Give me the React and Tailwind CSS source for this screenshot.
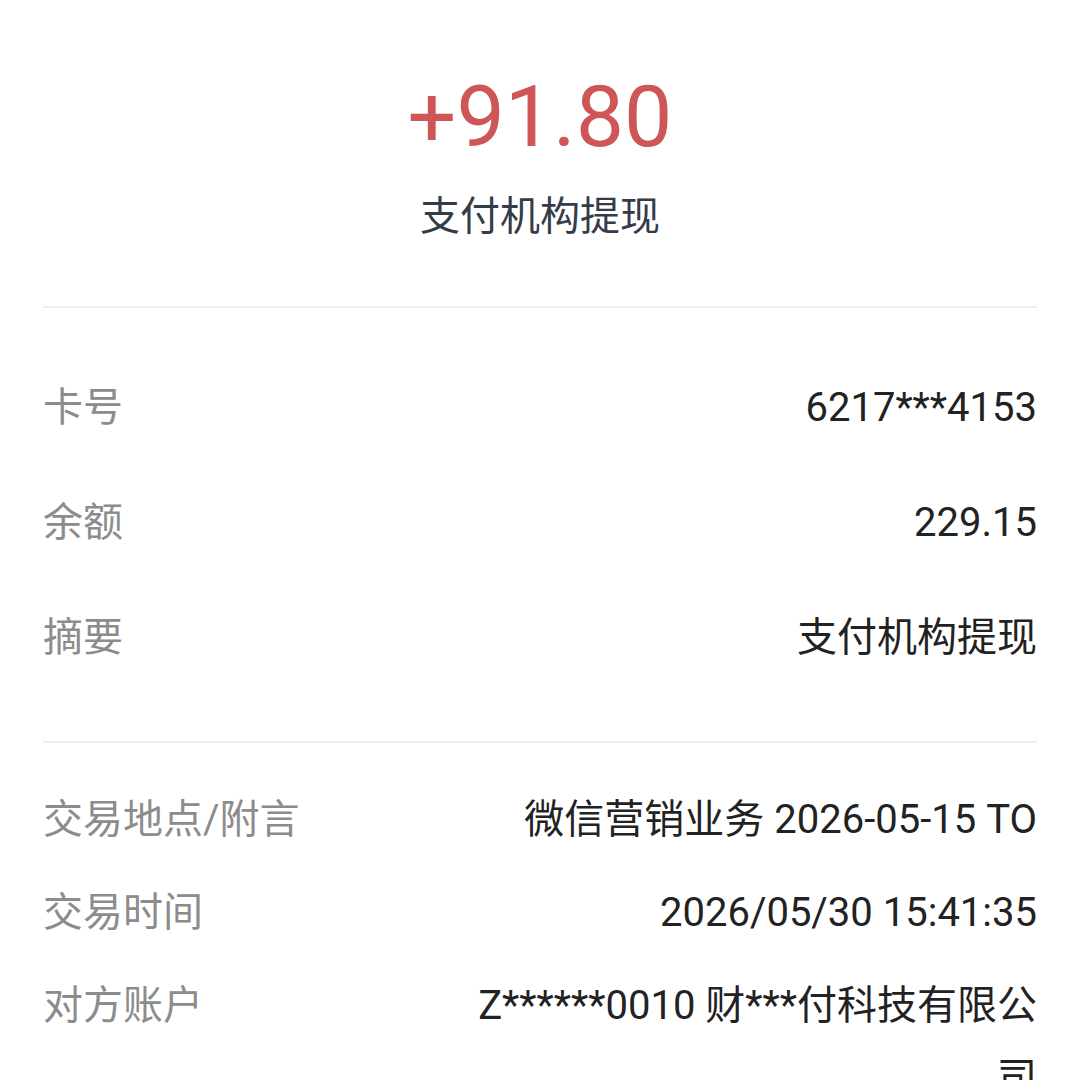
import React from 'react';

const font = { fontFamily: 'Roboto, "Noto Sans CJK SC", sans-serif' };

const topRows = [
  { label: '卡号', value: '6217***4153' },
  { label: '余额', value: '229.15' },
  { label: '摘要', value: '支付机构提现' },
];

const bottomRows = [
  { label: '交易地点/附言', value: '微信营销业务 2026-05-15 TO' },
  { label: '交易时间', value: '2026/05/30 15:41:35' },
  { label: '对方账户', value: 'Z******0010 财***付科技有限公司' },
];

function Row({ label, value }) {
  return (
    <div className="flex items-start justify-between text-[40px] leading-[72px]">
      <div className="text-[#8c8c8c] shrink-0">{label}</div>
      <div className="text-[#222222] text-right w-[580px] break-all">{value}</div>
    </div>
  );
}

export default function App() {
  return (
    <div className="w-[1080px] h-[1080px] bg-white overflow-hidden" style={font}>
      <div className="px-[43px]">
        <div className="flex flex-col items-center pt-[64px] pb-[61px]">
          <div className="text-[86px] leading-[106px] text-[#cf5656]">+91.80</div>
          <div className="text-[40px] leading-[56px] text-[#333c47] mt-[19px]">支付机构提现</div>
        </div>
        <div className="h-[2px] bg-[#eeeeee]" />
        <div className="flex flex-col gap-[43px] pt-[64px] pb-[67px]">
          {topRows.map((r) => (
            <Row key={r.label} {...r} />
          ))}
        </div>
        <div className="h-[2px] bg-[#eeeeee]" />
        <div className="flex flex-col gap-[21px] pt-[41px]">
          {bottomRows.map((r) => (
            <Row key={r.label} {...r} />
          ))}
        </div>
      </div>
    </div>
  );
}
